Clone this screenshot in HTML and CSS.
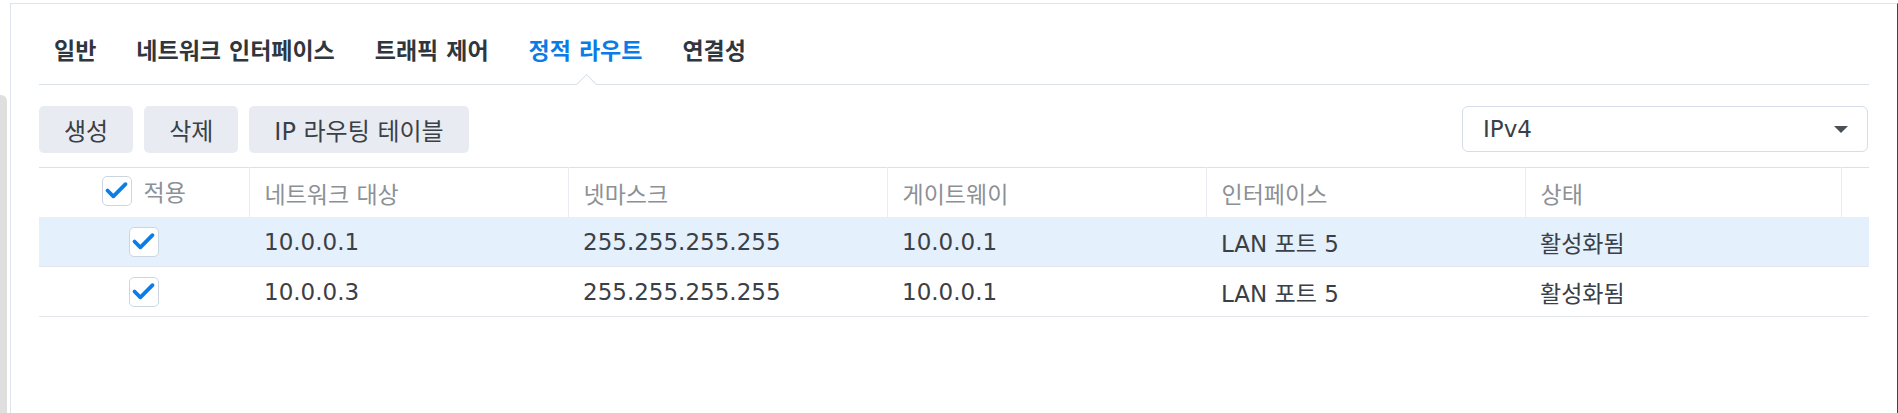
FILE: index.html
```html
<!DOCTYPE html>
<html>
<head>
  <title>정적 라우트</title>
  <link rel="stylesheet" href="styles.css">
</head>
<body>
  <div class="side">
    <div class="side-thumb"></div>
  </div>

  <div class="panel">
    <ul class="tabs">
      <li class="tab">일반</li>
      <li class="tab">네트워크 인터페이스</li>
      <li class="tab">트래픽 제어</li>
      <li class="tab active">정적 라우트</li>
      <li class="tab">연결성</li>
    </ul>

    <div class="toolbar">
      <div class="buttons">
        <button class="btn">생성</button>
        <button class="btn">삭제</button>
        <button class="btn">IP 라우팅 테이블</button>
      </div>
      <div class="select">
        <span>IPv4</span>
        <span class="caret"></span>
      </div>
    </div>

    <table class="grid">
      <colgroup>
        <col class="c-check">
        <col class="c-wide">
        <col class="c-wide">
        <col class="c-wide">
        <col class="c-wide">
        <col class="c-last">
        <col class="c-end">
      </colgroup>
      <thead>
        <tr>
          <th class="center">
            <span class="head-check">
              <span class="checkbox"><svg viewBox="0 0 30 30"><path d="M5 15 L11.5 21.5 L25 8"/></svg></span>
              적용
            </span>
          </th>
          <th>네트워크 대상</th>
          <th>넷마스크</th>
          <th>게이트웨이</th>
          <th>인터페이스</th>
          <th>상태</th>
          <th></th>
        </tr>
      </thead>
      <tbody>
        <tr class="selected">
          <td class="center"><span class="checkbox"><svg viewBox="0 0 30 30"><path d="M5 15 L11.5 21.5 L25 8"/></svg></span></td>
          <td>10.0.0.1</td>
          <td>255.255.255.255</td>
          <td>10.0.0.1</td>
          <td>LAN 포트 5</td>
          <td>활성화됨</td>
          <td></td>
        </tr>
        <tr>
          <td class="center"><span class="checkbox"><svg viewBox="0 0 30 30"><path d="M5 15 L11.5 21.5 L25 8"/></svg></span></td>
          <td>10.0.0.3</td>
          <td>255.255.255.255</td>
          <td>10.0.0.1</td>
          <td>LAN 포트 5</td>
          <td>활성화됨</td>
          <td></td>
        </tr>
      </tbody>
    </table>
  </div>
</body>
</html>
```

FILE: styles.css
```css
html, body {
  margin: 0;
  height: 413px;
  overflow: hidden;
}

body {
  display: flex;
  background-color: #fff;
  font-family: "DejaVu Sans", "Noto Sans CJK KR", sans-serif;
  font-size: 23px;
  color: #3a4047;
}

.side {
  width: 8px;
  margin-right: 3px;
  padding-top: 95px;
  box-sizing: border-box;
}

.side-thumb {
  height: 100%;
  background-color: #dfdfdf;
  border-top-right-radius: 6px;
}

.panel {
  flex: 1;
  margin-top: 3px;
  padding: 0 28px;
  border-top: 1px solid #e2e4e6;
  border-left: 1px solid #dde4eb;
  border-right: 1px solid #3b444d;
}

/* tabs */
.tabs {
  display: flex;
  gap: 40px;
  margin: 0;
  padding: 30px 0 0 15px;
  list-style: none;
  border-bottom: 1px solid #d8e0e8;
}

.tab {
  position: relative;
  line-height: 34px;
  padding-bottom: 16px;
  font-weight: bold;
  color: #30363d;
}

.tab.active {
  color: #0b7be6;
}

.tab.active::after {
  content: "";
  position: absolute;
  left: 50%;
  bottom: -8px;
  width: 14px;
  height: 14px;
  margin-left: -7px;
  background-color: #fff;
  border-top: 1px solid #d8e0e8;
  border-left: 1px solid #d8e0e8;
  transform: rotate(45deg);
}

/* toolbar */
.toolbar {
  display: flex;
  justify-content: space-between;
  margin-top: 21px;
}

.buttons {
  display: flex;
  gap: 11px;
}

.btn {
  height: 47px;
  padding: 0 25px;
  border: none;
  border-radius: 5px;
  background-color: #e8ecf2;
  font-family: inherit;
  font-size: 24px;
  color: #3a4047;
}

.select {
  display: flex;
  align-items: center;
  justify-content: space-between;
  width: 406px;
  height: 46px;
  box-sizing: border-box;
  margin-right: 1px;
  padding: 0 19px 0 20px;
  border: 1px solid #d5dee8;
  border-radius: 6px;
  color: #3a4047;
}

.caret {
  width: 0;
  height: 0;
  border-left: 7px solid transparent;
  border-right: 7px solid transparent;
  border-top: 7px solid #4a5057;
}

/* table */
.grid {
  width: 1829px;
  margin-top: 14px;
  border-collapse: collapse;
  table-layout: fixed;
}

.c-check { width: 210px; }
.c-wide { width: 319px; }
.c-last { width: 316px; }
.c-end { width: 28px; }

.grid th {
  height: 49px;
  padding: 0 15px;
  border-top: 1px solid #dae1e8;
  border-right: 1px solid #e9edf1;
  text-align: left;
  font-weight: normal;
  color: #8c9196;
}

.grid th:last-child {
  border-right: none;
}

.grid td {
  height: 49px;
  padding: 0 15px;
  border-bottom: 1px solid #e3e7eb;
  white-space: nowrap;
}

.grid .center {
  text-align: center;
  padding: 0;
}

.grid tr.selected td {
  background-color: #e4f0fc;
}

.head-check {
  display: inline-flex;
  align-items: center;
  gap: 12px;
}

.checkbox {
  display: inline-block;
  width: 30px;
  height: 30px;
  box-sizing: border-box;
  border: 1.5px solid #cbd6e2;
  border-radius: 5px;
  background-color: #fff;
  vertical-align: middle;
}

.checkbox svg {
  display: block;
  width: 27px;
  height: 27px;
}

.checkbox path {
  fill: none;
  stroke: #0a7de8;
  stroke-width: 4.2;
  stroke-linecap: round;
  stroke-linejoin: round;
}
```
